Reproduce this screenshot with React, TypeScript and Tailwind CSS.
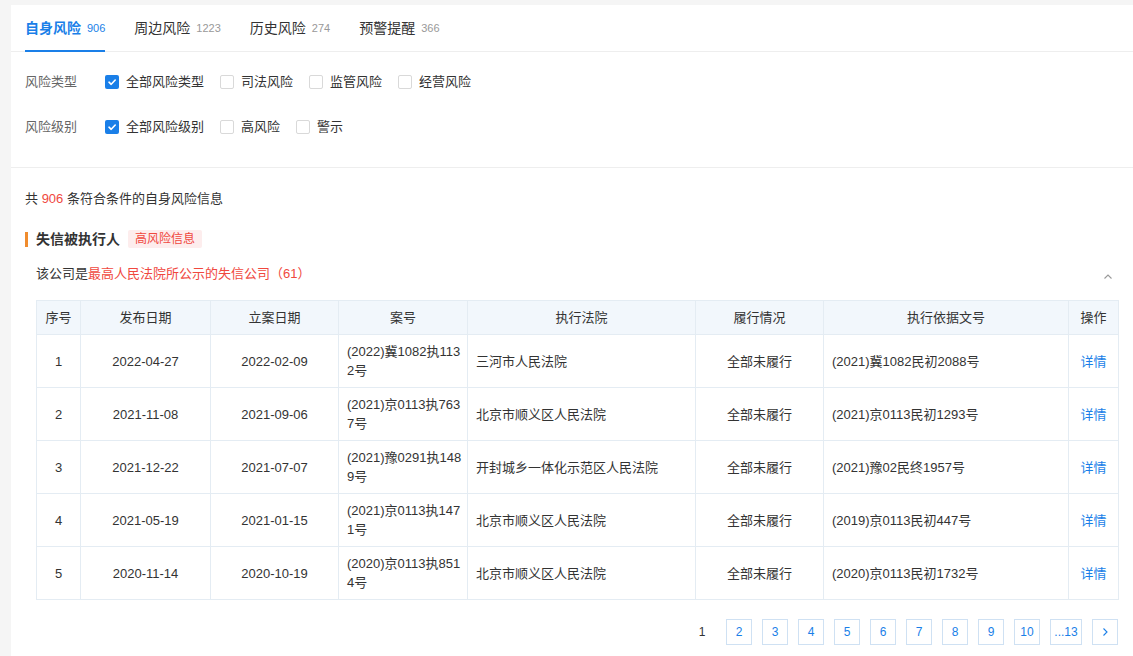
import React from "react";

const FONT = { fontFamily: '"Liberation Sans", Arial, "Noto Sans CJK SC", sans-serif' };

function Check({ checked, label }: { checked?: boolean; label: string }) {
  return (
    <div className="flex items-center mr-[16px]">
      {checked ? (
        <span className="w-[14px] h-[14px] rounded-[2px] bg-[#1a7fe8] flex items-center justify-center">
          <svg width="10" height="10" viewBox="0 0 10 10">
            <path d="M2 5.2 L4.2 7.3 L8.2 3" stroke="white" strokeWidth="1.6" fill="none" strokeLinecap="round" strokeLinejoin="round" />
          </svg>
        </span>
      ) : (
        <span className="w-[14px] h-[14px] rounded-[2px] border border-[#d9d9d9] bg-white" />
      )}
      <span className="ml-[7px] text-[13px] text-[#333]">{label}</span>
    </div>
  );
}

const rows = [
  ["1", "2022-04-27", "2022-02-09", "(2022)冀1082执113", "2号", "三河市人民法院", "全部未履行", "(2021)冀1082民初2088号"],
  ["2", "2021-11-08", "2021-09-06", "(2021)京0113执763", "7号", "北京市顺义区人民法院", "全部未履行", "(2021)京0113民初1293号"],
  ["3", "2021-12-22", "2021-07-07", "(2021)豫0291执148", "9号", "开封城乡一体化示范区人民法院", "全部未履行", "(2021)豫02民终1957号"],
  ["4", "2021-05-19", "2021-01-15", "(2021)京0113执147", "1号", "北京市顺义区人民法院", "全部未履行", "(2019)京0113民初447号"],
  ["5", "2020-11-14", "2020-10-19", "(2020)京0113执851", "4号", "北京市顺义区人民法院", "全部未履行", "(2020)京0113民初1732号"],
];

const widths = ["w-[44px]", "w-[130px]", "w-[128px]", "w-[129px]", "w-[228px]", "w-[128px]", "w-[245px]", "w-[50px]"];

export default function App() {
  const td = "border border-[#e4ecf3] text-[13px] leading-[19px]";
  return (
    <div className="min-h-[656px] bg-[#f5f5f5] pt-[5px] pl-[11px]" style={FONT}>
      <div className="bg-white min-h-[651px]">
        {/* tabs */}
        <div className="h-[47px] border-b border-[#eeeeee] flex items-stretch pl-[14px] gap-[29px]">
          <div className="relative flex items-center">
            <span className="text-[14px] text-[#1a7fe8] font-bold">自身风险</span>
            <span className="ml-[6px] text-[11px] text-[#1a7fe8]">906</span>
            <span className="absolute left-0 right-0 bottom-[-1px] h-[2px] bg-[#1a7fe8]" />
          </div>
          <div className="flex items-center">
            <span className="text-[14px] text-[#333]">周边风险</span>
            <span className="ml-[6px] text-[11px] text-[#999]">1223</span>
          </div>
          <div className="flex items-center">
            <span className="text-[14px] text-[#333]">历史风险</span>
            <span className="ml-[6px] text-[11px] text-[#999]">274</span>
          </div>
          <div className="flex items-center">
            <span className="text-[14px] text-[#333]">预警提醒</span>
            <span className="ml-[6px] text-[11px] text-[#999]">366</span>
          </div>
        </div>

        {/* filters */}
        <div className="border-b border-[#eeeeee] pl-[14px] pt-[20px] pb-[30px]">
          <div className="flex items-center h-[20px]">
            <span className="w-[80px] text-[13px] text-[#666]">风险类型</span>
            <Check checked label="全部风险类型" />
            <Check label="司法风险" />
            <Check label="监管风险" />
            <Check label="经营风险" />
          </div>
          <div className="flex items-center h-[20px] mt-[25px]">
            <span className="w-[80px] text-[13px] text-[#666]">风险级别</span>
            <Check checked label="全部风险级别" />
            <Check label="高风险" />
            <Check label="警示" />
          </div>
        </div>

        {/* content */}
        <div className="pl-[14px] pr-[15px]">
          <div className="pt-[21px] text-[13px] text-[#333] h-[41px]">
            共 <span className="text-[#f0483e]">906</span> 条符合条件的自身风险信息
          </div>
          <div className="flex items-center mt-[21px] h-[18px]">
            <span className="w-[3px] h-[15px] bg-[#f08c2e]" />
            <span className="ml-[8px] text-[14px] font-bold text-[#333]">失信被执行人</span>
            <span className="ml-[8px] h-[18px] px-[7px] bg-[#fdeded] text-[#f0483e] text-[12px] leading-[18px] rounded-[2px]">高风险信息</span>
          </div>
          <div className="flex items-center justify-between mt-[16px] pl-[11px] h-[20px]">
            <span className="text-[13px] text-[#333]">
              该公司是<span className="text-[#f0483e]">最高人民法院所公示的失信公司</span>
              <span className="text-[#f0483e]">（61）</span>
            </span>
            <svg width="12" height="12" viewBox="0 0 12 12" className="mr-[4px] mt-[6px]">
              <path d="M2.5 7.5 L6 4 L9.5 7.5" stroke="#999" strokeWidth="1.1" fill="none" />
            </svg>
          </div>

          <div className="pl-[11px] mt-[16px]">
            <table className="border-collapse w-[1082px] table-fixed">
              <thead>
                <tr className="bg-[#f2f7fc] h-[34px]">
                  {["序号", "发布日期", "立案日期", "案号", "执行法院", "履行情况", "执行依据文号", "操作"].map((h, i) => (
                    <th key={h} className={`${td} ${widths[i]} text-[#333] font-normal text-center`}>{h}</th>
                  ))}
                </tr>
              </thead>
              <tbody>
                {rows.map((r) => (
                  <tr key={r[0]} className="h-[53px]">
                    <td className={`${td} text-[#333] text-center`}>{r[0]}</td>
                    <td className={`${td} text-[#333] text-center`}>{r[1]}</td>
                    <td className={`${td} text-[#333] text-center`}>{r[2]}</td>
                    <td className={`${td} text-[#333] text-left pl-[8px] pr-[4px]`}>
                      <span className="block whitespace-nowrap">{r[3]}</span>
                      <span className="block">{r[4]}</span>
                    </td>
                    <td className={`${td} text-[#333] text-left pl-[8px]`}>{r[5]}</td>
                    <td className={`${td} text-[#333] text-center`}>{r[6]}</td>
                    <td className={`${td} text-[#333] text-left pl-[8px]`}>{r[7]}</td>
                    <td className={`${td} text-center text-[#1a7fe8]`}>详情</td>
                  </tr>
                ))}
              </tbody>
            </table>
          </div>

          {/* pagination */}
          <div className="flex justify-end items-center mt-[19px] gap-[10px] pb-[20px]">
            <span className="w-[16px] text-center text-[12px] text-[#333] mr-[6px]">1</span>
            {["2", "3", "4", "5", "6", "7", "8", "9", "10"].map((p) => (
              <span key={p} className="w-[26px] h-[26px] border border-[#cfe1f3] flex items-center justify-center text-[12px] text-[#1a7fe8]">{p}</span>
            ))}
            <span className="w-[32px] h-[26px] border border-[#cfe1f3] flex items-center justify-center text-[12px] text-[#1a7fe8]">...13</span>
            <span className="w-[26px] h-[26px] border border-[#cfe1f3] flex items-center justify-center">
              <svg width="10" height="10" viewBox="0 0 10 10">
                <path d="M3.5 1.5 L7 5 L3.5 8.5" stroke="#1a7fe8" strokeWidth="1.1" fill="none" />
              </svg>
            </span>
          </div>
        </div>
      </div>
    </div>
  );
}
